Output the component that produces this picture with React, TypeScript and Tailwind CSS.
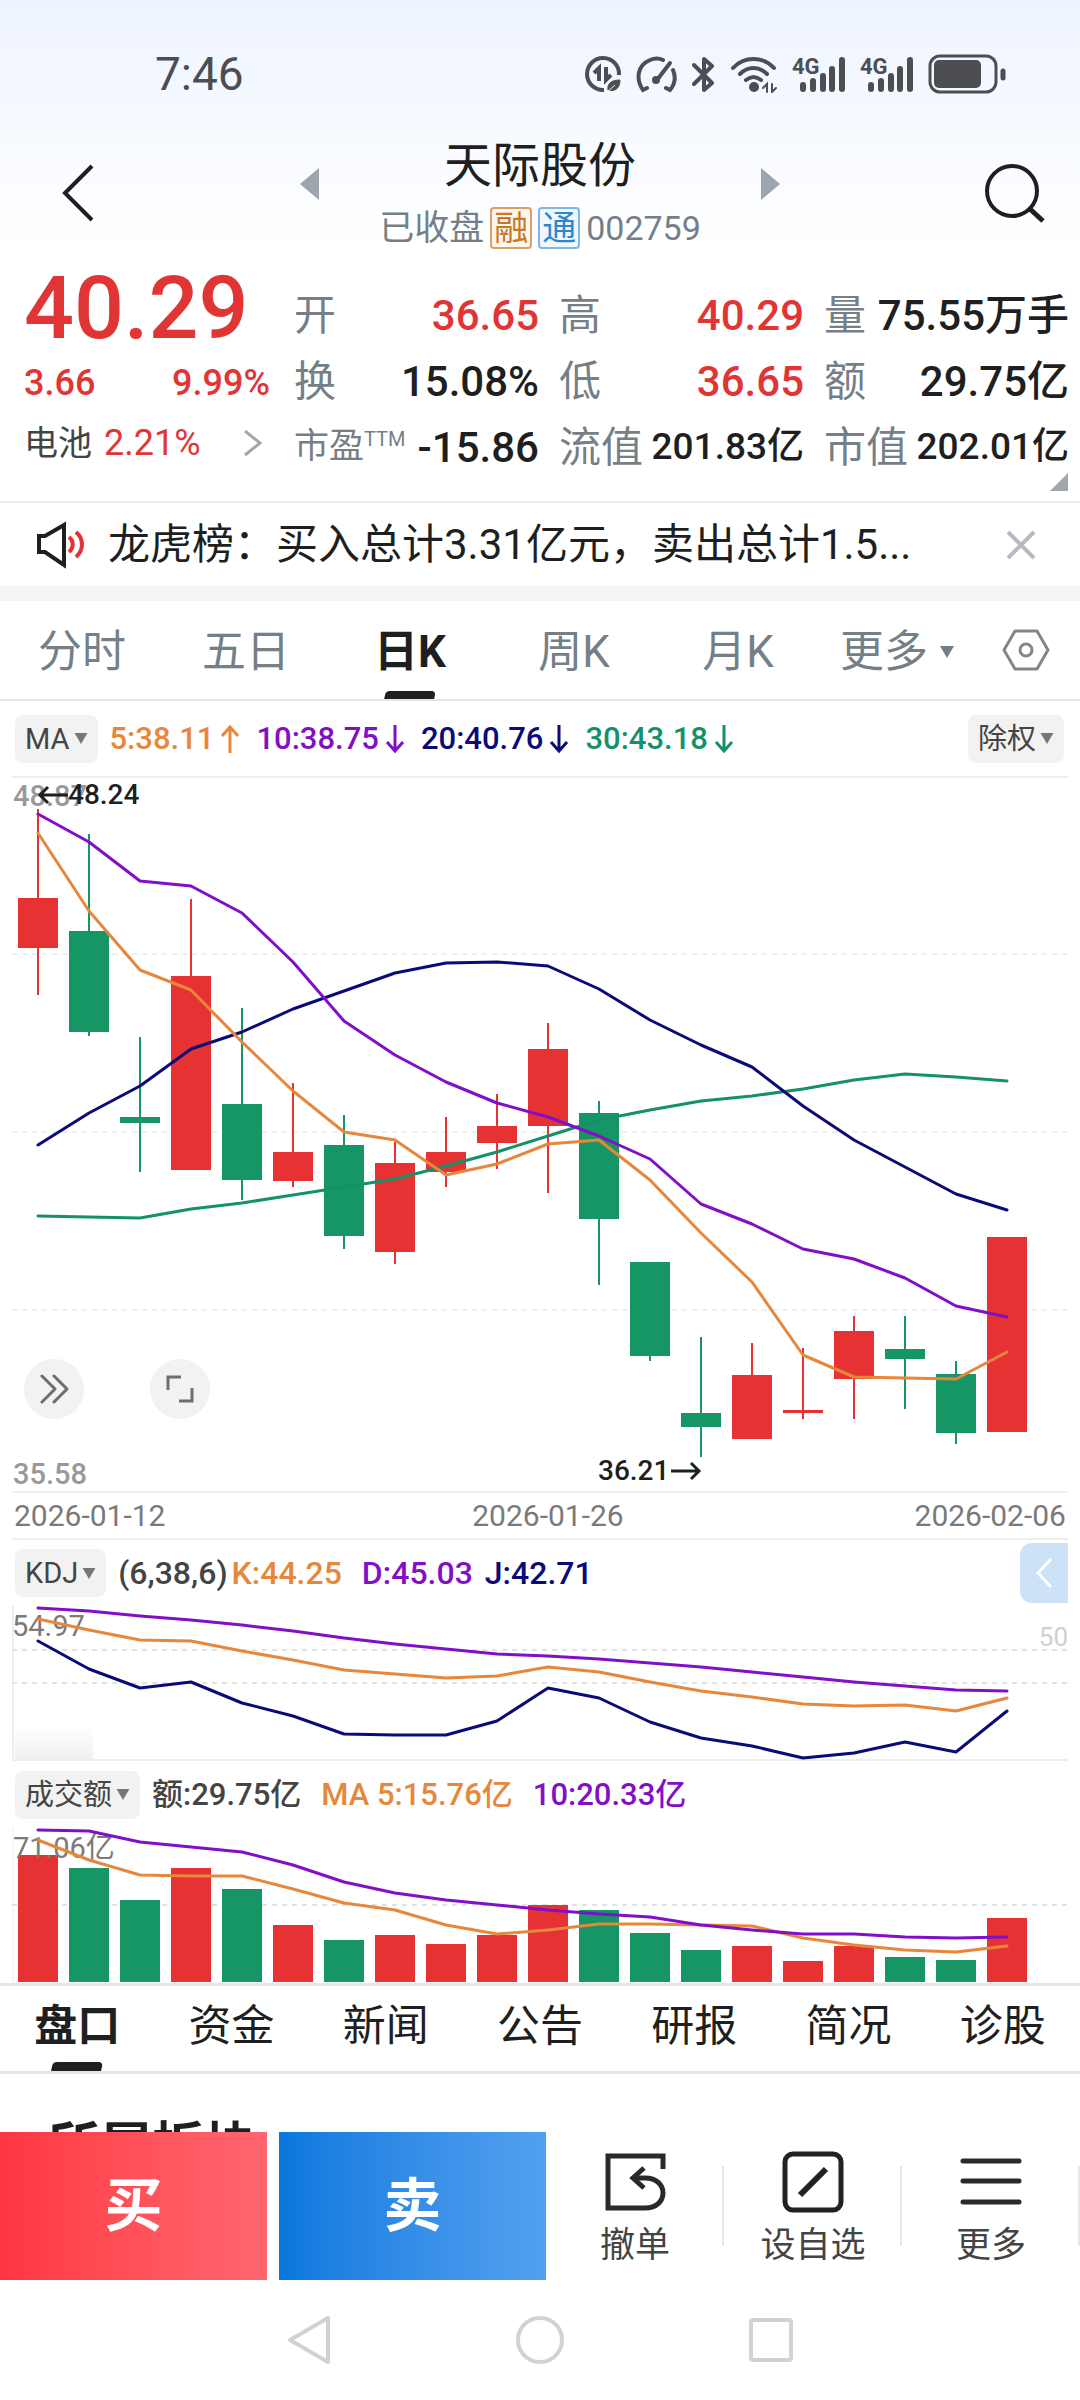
import React from "react";

const RED = "#e63232";
const GREEN = "#169664";
const ORANGE = "#e6873c";
const PURPLE = "#820fc8";
const NAVY = "#0a0a78";
const TEAL = "#149169";

const FIRST_X = 38;
const STEP_X = 51;
const BAR_W = 40;

type Candle = [high: number, top: number, bottom: number, low: number, up: 0 | 1];

const candles: Candle[] = [
  [810, 899, 949, 996, 1],
  [835, 932, 1033, 1037, 0],
  [1038, 1118, 1124, 1173, 0],
  [900, 977, 1171, 1171, 1],
  [1009, 1105, 1181, 1201, 0],
  [1084, 1153, 1182, 1188, 1],
  [1116, 1146, 1237, 1250, 0],
  [1143, 1164, 1253, 1265, 1],
  [1118, 1153, 1173, 1188, 1],
  [1095, 1127, 1144, 1170, 1],
  [1024, 1050, 1127, 1194, 1],
  [1102, 1114, 1220, 1286, 0],
  [1263, 1263, 1357, 1362, 0],
  [1338, 1414, 1428, 1458, 0],
  [1344, 1376, 1440, 1440, 1],
  [1349, 1411, 1414, 1420, 1],
  [1317, 1332, 1380, 1420, 1],
  [1317, 1350, 1360, 1410, 0],
  [1362, 1375, 1434, 1445, 0],
  [1238, 1238, 1433, 1433, 1],
];

const priceLines = [
  { color: TEAL, ys: [1217, 1218, 1219, 1210, 1204, 1196, 1188, 1180, 1167, 1153, 1137, 1121, 1111, 1102, 1097, 1090, 1081, 1075, 1078, 1082] },
  { color: NAVY, ys: [1146, 1114, 1087, 1050, 1033, 1010, 992, 974, 964, 963, 967, 990, 1021, 1046, 1068, 1107, 1141, 1168, 1195, 1211] },
  { color: ORANGE, ys: [834, 912, 971, 991, 1043, 1092, 1133, 1141, 1176, 1165, 1145, 1141, 1181, 1234, 1283, 1356, 1378, 1379, 1380, 1353] },
  { color: PURPLE, ys: [815, 843, 882, 887, 914, 963, 1022, 1056, 1083, 1104, 1118, 1137, 1160, 1205, 1225, 1250, 1260, 1279, 1307, 1318] },
];

const kdjLines = [
  { color: PURPLE, ys: [1609, 1612, 1617, 1621, 1626, 1632, 1639, 1645, 1650, 1655, 1657, 1660, 1664, 1668, 1673, 1678, 1683, 1687, 1691, 1692] },
  { color: ORANGE, ys: [1620, 1631, 1641, 1642, 1652, 1661, 1671, 1675, 1679, 1677, 1668, 1673, 1683, 1692, 1698, 1705, 1707, 1706, 1712, 1699] },
  { color: NAVY, ys: [1642, 1670, 1689, 1683, 1704, 1717, 1735, 1736, 1736, 1722, 1689, 1699, 1723, 1739, 1747, 1759, 1754, 1743, 1753, 1712] },
];

const volumeTops = [1856, 1869, 1901, 1869, 1890, 1926, 1941, 1936, 1945, 1936, 1906, 1911, 1934, 1951, 1947, 1962, 1947, 1958, 1961, 1919];

const volumeLines = [
  { color: ORANGE, ys: [1841, 1861, 1876, 1877, 1877, 1890, 1904, 1911, 1926, 1935, 1931, 1925, 1925, 1926, 1927, 1939, 1946, 1951, 1953, 1947] },
  { color: PURPLE, ys: [1831, 1832, 1843, 1848, 1853, 1866, 1883, 1894, 1901, 1906, 1911, 1915, 1918, 1926, 1931, 1935, 1935, 1938, 1939, 1938] },
];

const cx = (i: number) => FIRST_X + STEP_X * i;

function Line({ color, ys }: { color: string; ys: number[] }) {
  return (
    <polyline
      points={ys.map((y, i) => `${cx(i)},${y}`).join(" ")}
      fill="none"
      stroke={color}
      strokeWidth="3"
      strokeLinejoin="round"
      strokeLinecap="round"
    />
  );
}

function Dashed({ y, color }: { y: number; color: string }) {
  return <line x1="12" x2="1068" y1={y} y2={y} stroke={color} strokeWidth="2" strokeDasharray="5 5" />;
}

function Caret({ className }: { className: string }) {
  return (
    <svg viewBox="0 0 14 12" className={className} fill="currentColor" aria-hidden="true">
      <path d="M0 0h14L7 12z" />
    </svg>
  );
}

function Chip({ label, name, options }: { label: string; name: string; options: string[] }) {
  return (
    <div className="relative flex items-center">
      <select
        aria-label={name}
        defaultValue={label}
        className="h-12 appearance-none rounded-lg bg-[#f2f2f2] pr-7 pl-[10px] text-[29px] leading-[48px] font-normal text-[#444444] [field-sizing:content]"
      >
        {options.map((o) => (
          <option key={o}>{o}</option>
        ))}
      </select>
      <Caret className="pointer-events-none absolute right-[10px] h-[11px] w-[14px] text-[#777777]" />
    </div>
  );
}

function Signal() {
  return (
    <svg viewBox="0 0 53 37" className="h-[37px] w-[53px]" fill="currentColor" aria-hidden="true">
      <text x="0" y="18" fontSize="22" fontWeight="700">4G</text>
      <g stroke="currentColor" strokeWidth="6" strokeLinecap="round">
        <path d="M11 29v4M21 25v8M31 20v13M40 13v20M50 4v29" />
      </g>
    </svg>
  );
}

function StatusBar() {
  return (
    <div className="flex h-[100px] items-center justify-between pt-12 pr-[74px] pl-[155px] text-[#4c4e51]">
      <span className="text-[46px] leading-none">7:46</span>
      <div className="flex items-center gap-[15px]">
        <svg viewBox="0 0 36 37" className="h-[37px] w-9" fill="none" stroke="currentColor" strokeWidth="4" aria-hidden="true">
          <path d="M19 34A16 16 0 1 1 34 19" />
          <path d="M9 17l5-5v13M21 11v13l5-5" strokeWidth="4" />
          <path d="M23 34c-1-7 4-10 12-10 0 8-5 12-11 10" fill="currentColor" strokeWidth="1" />
          <path d="M22 36l8-7" stroke="#f3f7fe" strokeWidth="1" />
        </svg>
        <svg viewBox="0 0 41 37" className="h-[37px] w-[41px]" fill="none" stroke="currentColor" strokeWidth="4" strokeLinecap="round" aria-hidden="true">
          <path d="M11 32l-4 2C-1 22 2 9 14 4c5-2 9-2 13 0M37 14c3 7 2 14-3 20l-4-2" />
          <path d="M34 7L21 24" />
          <circle cx="20" cy="24" r="3" fill="currentColor" strokeWidth="2" />
        </svg>
        <svg viewBox="0 0 23 37" className="h-[37px] w-[23px]" fill="none" stroke="currentColor" strokeWidth="4" strokeLinejoin="round" strokeLinecap="round" aria-hidden="true">
          <path d="M2 9l18 18-8 7V3l8 7L2 28" />
        </svg>
        <svg viewBox="0 0 47 37" className="h-[37px] w-[47px]" fill="none" stroke="currentColor" strokeWidth="4" strokeLinecap="round" aria-hidden="true">
          <path d="M3 12C14 0 33 0 44 12M10 18c8-8 19-8 27 0M16 24c5-4 10-4 15 0" />
          <circle cx="24" cy="31" r="5" fill="currentColor" stroke="none" />
          <path d="M33 32l4-4v8M42 28v8l4-4" strokeWidth="2" />
        </svg>
        <Signal />
        <Signal />
        <svg viewBox="0 0 78 40" className="h-10 w-[78px]" fill="none" stroke="currentColor" aria-hidden="true">
          <rect x="2" y="2" width="66" height="36" rx="10" strokeWidth="3" />
          <rect x="6" y="6" width="47" height="28" rx="5" fill="currentColor" stroke="none" />
          <path d="M75 17v7" strokeWidth="5" strokeLinecap="round" />
        </svg>
      </div>
    </div>
  );
}

function Header() {
  return (
    <header className="grid grid-cols-[1fr_480px_1fr] items-center pt-9">
      <div className="flex pl-[62px]">
        <button aria-label="返回">
          <svg viewBox="0 0 32 58" className="h-[58px] w-8" fill="none" stroke="#1e1f20" strokeWidth="4" aria-hidden="true">
            <path d="M30 2L3 29l27 27" />
          </svg>
        </button>
      </div>
      <div className="flex items-start justify-between">
        <button aria-label="上一只" className="mt-8">
          <svg viewBox="0 0 19 32" className="h-8 w-[19px]" fill="#9da5ae" aria-hidden="true"><path d="M19 0v32L0 16z" /></svg>
        </button>
        <div className="flex flex-col items-center gap-[10px]">
          <h1 className="text-[48px] leading-[60px] text-[#1e1f20]">天际股份</h1>
          <div className="flex h-11 items-center text-[35px] leading-none text-[#757f88]">
            <span>已收盘</span>
            <span className="ml-[6px] flex h-[42px] w-[42px] items-center justify-center rounded border-2 border-[#d9a066] bg-[#fdf6ee] text-[34px] text-[#c87823]">融</span>
            <span className="ml-[6px] flex h-[42px] w-[42px] items-center justify-center rounded border-2 border-[#7db8e4] bg-[#eff7fd] text-[34px] text-[#2d87cd]">通</span>
            <span className="ml-[6px] text-[34px]">002759</span>
          </div>
        </div>
        <button aria-label="下一只" className="mt-8">
          <svg viewBox="0 0 19 32" className="h-8 w-[19px]" fill="#9da5ae" aria-hidden="true"><path d="M0 0v32l19-16z" /></svg>
        </button>
      </div>
      <div className="flex justify-end pr-[34px]">
        <button aria-label="搜索">
          <svg viewBox="0 0 62 60" className="h-[60px] w-[62px]" fill="none" stroke="#1e1f20" strokeWidth="4" aria-hidden="true">
            <circle cx="28" cy="28" r="25" />
            <path d="M46 46l13 12" strokeWidth="5" />
          </svg>
        </button>
      </div>
    </header>
  );
}

type Cell = { label: string; value: string; red?: boolean; small?: boolean; ttm?: boolean };

const cells: Cell[] = [
  { label: "开", value: "36.65", red: true },
  { label: "高", value: "40.29", red: true },
  { label: "量", value: "75.55万手" },
  { label: "换", value: "15.08%" },
  { label: "低", value: "36.65", red: true },
  { label: "额", value: "29.75亿" },
  { label: "市盈", value: "-15.86", ttm: true },
  { label: "流值", value: "201.83亿", small: true },
  { label: "市值", value: "202.01亿", small: true },
];

function Quote() {
  return (
    <section className="relative flex gap-6 border-b-2 border-[#ececec] pr-[11px] pb-[21px] pl-6">
      <div className="w-[246px] pt-3 text-[#e13535]">
        <div className="text-[88px] leading-[91px] font-medium">40.29</div>
        <div className="flex h-[60px] items-center justify-between text-[36px] font-medium">
          <span>3.66</span>
          <span>9.99%</span>
        </div>
        <a href="#sector" className="flex h-[60px] items-center text-[36px]">
          <span className="text-[34px] text-[#444444]">电池</span>
          <span className="ml-3">2.21%</span>
          <svg viewBox="0 0 18 26" className="mr-2 ml-auto h-[26px] w-[18px]" fill="none" stroke="#a0a6ad" strokeWidth="3" aria-hidden="true">
            <path d="M1 1l15 12L1 25" />
          </svg>
        </a>
      </div>
      <dl className="grid flex-1 grid-cols-3 gap-x-5 pt-8">
        {cells.map((c) => (
          <div key={c.label} className="flex h-[66px] items-center justify-between whitespace-nowrap">
            <dt className={c.ttm ? "flex items-center text-[35px] text-[#757f88]" : "text-[42px] text-[#757f88]"}>
              {c.label}
              {c.ttm && <span className="mb-4 text-[20px] leading-none">TTM</span>}
            </dt>
            <dd className={`${c.small ? "text-[37px]" : "text-[42px]"} ${c.red ? "text-[#e13535]" : "text-[#1e1f20]"} font-medium`}>
              {c.value}
            </dd>
          </div>
        ))}
      </dl>
      <svg viewBox="0 0 18 18" className="absolute right-3 bottom-[10px] h-[18px] w-[18px]" fill="#a0a6ad" aria-hidden="true">
        <path d="M18 0v18H0z" />
      </svg>
    </section>
  );
}

function Notice() {
  return (
    <section className="flex h-[98px] items-center border-b-[15px] border-[#f4f4f4] pr-11 pl-9">
      <svg viewBox="0 0 50 48" className="h-12 w-[50px] shrink-0" fill="none" strokeWidth="4" aria-hidden="true">
        <path d="M3 15h6L28 4v40L9 31H3z" stroke="#1e1f20" />
        <path d="M33 16c5 4 5 11 0 15M40 11c8 7 8 18 0 25" stroke="#e13535" />
      </svg>
      <a href="#notice" className="ml-[22px] flex-1 text-[42px] leading-[60px] whitespace-nowrap text-[#1e1f20]">
        龙虎榜：买入总计3.31亿元，卖出总计1.5...
      </a>
      <button aria-label="关闭">
        <svg viewBox="0 0 30 30" className="h-[30px] w-[30px]" fill="none" stroke="#b6bac1" strokeWidth="4" aria-hidden="true">
          <path d="M2 2l26 26M28 2L2 28" />
        </svg>
      </button>
    </section>
  );
}

function PeriodTabs() {
  return (
    <nav role="tablist" className="flex h-[100px] items-center border-b-2 border-[#e6e6e6] pr-[30px] text-[44px] text-[#757f88]">
      <div className="grid h-full flex-1 grid-cols-5">
        {["分时", "五日", "日K", "周K", "月K"].map((t) => {
          const active = t === "日K";
          return (
            <button
              key={t}
              role="tab"
              aria-selected={active}
              className={active ? "relative pt-1 font-bold text-[#1e1f20]" : "relative pt-1"}
            >
              {t}
              {active && <span className="absolute bottom-0 left-1/2 h-2 w-[50px] -translate-x-1/2 -skew-x-12 rounded-t-sm bg-[#1e1f20]" />}
            </button>
          );
        })}
      </div>
      <button className="ml-5 flex items-center gap-3 pt-1">
        更多
        <Caret className="h-3 w-[14px]" />
      </button>
      <button aria-label="图表设置" className="ml-12">
        <svg viewBox="0 0 48 42" className="h-[42px] w-12" fill="none" stroke="#858585" strokeWidth="3" strokeLinejoin="round" aria-hidden="true">
          <path d="M13 2h22l11 19-11 19H13L2 21z" />
          <circle cx="24" cy="21" r="6" />
        </svg>
      </button>
    </nav>
  );
}

function Trend({ up }: { up?: boolean }) {
  return (
    <svg viewBox="0 0 20 30" className="h-[30px] w-5" fill="none" stroke="currentColor" strokeWidth="3" aria-hidden="true">
      {up ? <path d="M10 29V3M2 12l8-9 8 9" /> : <path d="M10 1v26M2 18l8 9 8-9" />}
    </svg>
  );
}

function Averages() {
  return (
    <div className="flex h-[75px] items-center pr-4 pl-[15px] text-[31px] leading-none font-medium">
      <Chip name="主图指标" label="MA" options={["MA", "BOLL"]} />
      <div className="ml-3 flex items-center gap-4">
        <span className="flex items-center gap-[6px] text-[#e6873c]">5:38.11<Trend up /></span>
        <span className="flex items-center gap-[6px] text-[#820fc8]">10:38.75<Trend /></span>
        <span className="flex items-center gap-[6px] text-[#0a0a78]">20:40.76<Trend /></span>
        <span className="flex items-center gap-[6px] text-[#149169]">30:43.18<Trend /></span>
      </div>
      <div className="ml-auto">
        <Chip name="复权方式" label="除权" options={["除权", "前复权", "后复权"]} />
      </div>
    </div>
  );
}

function PriceChart() {
  return (
    <div className="relative">
      <svg viewBox="0 777 1080 715" className="block w-full" role="img" aria-label="日K线图">
        <line x1="12" x2="1068" y1="778" y2="778" stroke="#eeeeee" strokeWidth="2" />
        <Dashed y={955} color="#eeeeee" />
        <Dashed y={1133} color="#eeeeee" />
        <Dashed y={1311} color="#eeeeee" />
        <text x="13" y="807" fontSize="29" fontWeight="500" fill="#999999">48.87</text>
        <text x="13" y="1485" fontSize="29" fontWeight="500" fill="#999999">35.58</text>
        {candles.map(([high, top, bottom, low, up], i) => (
          <g key={i} fill={up ? RED : GREEN}>
            <rect x={cx(i) - 1} y={high} width="2" height={low - high} />
            <rect x={cx(i) - BAR_W / 2} y={top} width={BAR_W} height={bottom - top} />
          </g>
        ))}
        {priceLines.map((l) => (
          <Line key={l.color} {...l} />
        ))}
        <g fontSize="28" fontWeight="500" fill="#1e1f20">
          <text x="68" y="805">48.24</text>
          <text x="598" y="1481">36.21</text>
        </g>
        <g fill="none" stroke="#1e1f20" strokeWidth="3">
          <path d="M68 796H40M48 788l-8 8 8 8" />
          <path d="M671 1472h28M691 1464l8 8-8 8" />
        </g>
      </svg>
      <div className="absolute bottom-[72px] left-6 flex gap-[66px]">
        <button aria-label="展开" className="flex h-[60px] w-[60px] items-center justify-center rounded-full bg-[#f2f2f2]">
          <svg viewBox="0 0 30 30" className="h-[30px] w-[30px]" fill="none" stroke="#6e6e6e" strokeWidth="3" strokeLinecap="round" strokeLinejoin="round" aria-hidden="true">
            <path d="M3 2l13 13L3 28M15 2l13 13-13 13" />
          </svg>
        </button>
        <button aria-label="全屏" className="flex h-[60px] w-[60px] items-center justify-center rounded-full bg-[#f2f2f2]">
          <svg viewBox="0 0 30 30" className="h-[30px] w-[30px]" fill="none" stroke="#6e6e6e" strokeWidth="3" aria-hidden="true">
            <path d="M3 16V3h13M27 14v13H14" />
          </svg>
        </button>
      </div>
    </div>
  );
}

function DateAxis() {
  return (
    <div className="mx-3 grid h-[49px] grid-cols-3 items-center border-y-2 border-[#eeeeee] px-[2px] text-[30px] leading-none text-[#7a7a7a]">
      <span>2026-01-12</span>
      <span className="pl-4 text-center">2026-01-26</span>
      <span className="text-right">2026-02-06</span>
    </div>
  );
}

function Kdj() {
  return (
    <section>
      <div className="flex h-[66px] items-center pr-3 pl-[15px] text-[32px] leading-none font-medium">
        <Chip name="副图指标" label="KDJ" options={["KDJ", "MACD"]} />
        <span className="ml-3 text-[#444444]">(6,38,6)</span>
        <span className="ml-1 text-[#e6873c]">K:44.25</span>
        <span className="ml-5 text-[#820fc8]">D:45.03</span>
        <span className="ml-3 text-[#0a0a78]">J:42.71</span>
        <button aria-label="展开侧栏" className="ml-auto flex h-[60px] w-12 items-center justify-center rounded-l-xl bg-[#cce2f6]">
          <svg viewBox="0 0 18 30" className="h-[30px] w-[18px]" fill="none" stroke="#ffffff" strokeWidth="3" aria-hidden="true">
            <path d="M16 1L3 15l13 14" />
          </svg>
        </button>
      </div>
      <svg viewBox="0 1607 1080 155" className="block w-full" role="img" aria-label="KDJ 指标图">
        <defs>
          <linearGradient id="haze" x1="0" y1="0" x2="0" y2="1">
            <stop offset="0" stopColor="#ffffff" />
            <stop offset="1" stopColor="#f0f0f0" />
          </linearGradient>
        </defs>
        <rect x="15" y="1725" width="78" height="36" fill="url(#haze)" />
        <path d="M13 1607V1761H1068" fill="none" stroke="#eeeeee" strokeWidth="2" />
        <Dashed y={1651} color="#e2e2e2" />
        <Dashed y={1684} color="#e2e2e2" />
        <text x="12" y="1637" fontSize="29" fill="#7a7a7a">54.97</text>
        <text x="1068" y="1647" fontSize="26" fill="#d0d0d4" textAnchor="end">50</text>
        {kdjLines.map((l) => (
          <Line key={l.color} {...l} />
        ))}
      </svg>
    </section>
  );
}

function Volume() {
  return (
    <section>
      <div className="flex h-[67px] items-center pl-[15px] text-[31px] leading-none font-medium">
        <Chip name="成交指标" label="成交额" options={["成交额", "成交量"]} />
        <span className="ml-3 text-[#444444]">额:29.75亿</span>
        <span className="ml-5 text-[#e6873c]">MA 5:15.76亿</span>
        <span className="ml-5 text-[#820fc8]">10:20.33亿</span>
      </div>
      <svg viewBox="0 1829 1080 155" className="block w-full" role="img" aria-label="成交额图">
        <line x1="13" x2="13" y1="1829" y2="1984" stroke="#eeeeee" strokeWidth="1" />
        <Dashed y={1906} color="#e2e2e2" />
        {volumeTops.map((y, i) => (
          <rect key={i} x={cx(i) - BAR_W / 2} y={y} width={BAR_W} height={1983 - y} fill={candles[i][4] ? RED : GREEN} />
        ))}
        <text x="13" y="1859" fontSize="29" fill="#7a7a7a">71.06亿</text>
        {volumeLines.map((l) => (
          <Line key={l.color} {...l} />
        ))}
      </svg>
    </section>
  );
}

function InfoTabs() {
  return (
    <nav role="tablist" className="grid h-[91px] grid-cols-7 border-y-[3px] border-[#e6e6e6] text-[43px] text-[#1e1f20]">
      {["盘口", "资金", "新闻", "公告", "研报", "简况", "诊股"].map((t, i) => (
        <button key={t} role="tab" aria-selected={i === 0} className={i === 0 ? "relative pb-1 font-bold" : "relative pb-1"}>
          {t}
          {i === 0 && <span className="absolute bottom-0 left-1/2 h-[9px] w-[50px] -translate-x-1/2 -skew-x-12 rounded-t-sm bg-[#1e1f20]" />}
        </button>
      ))}
    </nav>
  );
}

function Actions() {
  return (
    <div className="flex h-[148px] shrink-0 bg-white">
      <div className="grid w-[546px] grid-cols-2 gap-3 pb-0 text-[58px] font-bold text-white">
        <button className="bg-linear-to-r from-[#ff3541] to-[#ff6670]">买</button>
        <button className="bg-linear-to-r from-[#0678dd] to-[#52a1f0]">卖</button>
      </div>
      <div className="grid flex-1 grid-cols-3 text-[35px] text-[#444444]">
        <button className="relative flex flex-col items-center pt-[18px]">
          <svg viewBox="0 0 64 64" className="h-16 w-16" fill="none" stroke="#2a2a2a" strokeWidth="5" aria-hidden="true">
            <path d="M60 19V6H5v52h37c24 0 24-30 0-30H32" />
            <path d="M41 18L30 28l11 10" />
          </svg>
          <span className="mt-2 leading-[48px]">撤单</span>
          <span className="absolute top-[34px] right-0 h-[80px] w-[2px] bg-[#e6e6e8]" />
        </button>
        <button className="relative flex flex-col items-center pt-[18px]">
          <svg viewBox="0 0 64 64" className="h-16 w-16" fill="none" stroke="#222222" strokeWidth="5" aria-hidden="true">
            <rect x="4" y="4" width="56" height="56" rx="8" />
            <path d="M19 45l26-26" strokeWidth="6" />
          </svg>
          <span className="mt-2 leading-[48px]">设自选</span>
          <span className="absolute top-[34px] right-0 h-[80px] w-[2px] bg-[#e6e6e8]" />
        </button>
        <button className="relative flex flex-col items-center pt-[18px]">
          <svg viewBox="0 0 64 64" className="h-16 w-16" fill="none" stroke="#2a2a2a" strokeWidth="5" strokeLinecap="round" aria-hidden="true">
            <path d="M4 11h56M4 31h56M4 52h56" />
          </svg>
          <span className="mt-2 leading-[48px]">更多</span>
          <span className="absolute top-[34px] right-0 h-[80px] w-[2px] bg-[#e6e6e8]" />
        </button>
      </div>
    </div>
  );
}

function SystemNav() {
  return (
    <div className="flex h-[120px] shrink-0 items-center justify-center gap-[185px] bg-white">
      <button aria-label="系统返回">
        <svg viewBox="0 0 44 50" className="h-[50px] w-11" fill="none" stroke="#d2d2d2" strokeWidth="4" strokeLinejoin="round" aria-hidden="true">
          <path d="M41 3v44L3 25z" />
        </svg>
      </button>
      <button aria-label="主屏幕">
        <svg viewBox="0 0 48 48" className="h-12 w-12" fill="none" stroke="#d2d2d2" strokeWidth="4" aria-hidden="true">
          <circle cx="24" cy="24" r="22" />
        </svg>
      </button>
      <button aria-label="最近任务">
        <svg viewBox="0 0 44 44" className="h-11 w-11" fill="none" stroke="#d2d2d2" strokeWidth="4" aria-hidden="true">
          <rect x="2" y="2" width="40" height="40" rx="2" />
        </svg>
      </button>
    </div>
  );
}

export default function App() {
  return (
    <div className="flex h-screen flex-col bg-white font-[Roboto,'Noto_Sans_CJK_SC',sans-serif]">
      <main className="min-h-0 flex-1 overflow-y-auto [scrollbar-width:none]">
        <div className="bg-linear-to-b from-[#eef4ff] to-white">
          <StatusBar />
          <Header />
        </div>
        <Quote />
        <Notice />
        <PeriodTabs />
        <Averages />
        <PriceChart />
        <DateAxis />
        <Kdj />
        <Volume />
        <InfoTabs />
        <h2 id="sector" className="px-12 pt-[42px] text-[52px] leading-[64px] font-bold text-[#1e1f20]">所属板块</h2>
      </main>
      <Actions />
      <SystemNav />
    </div>
  );
}
